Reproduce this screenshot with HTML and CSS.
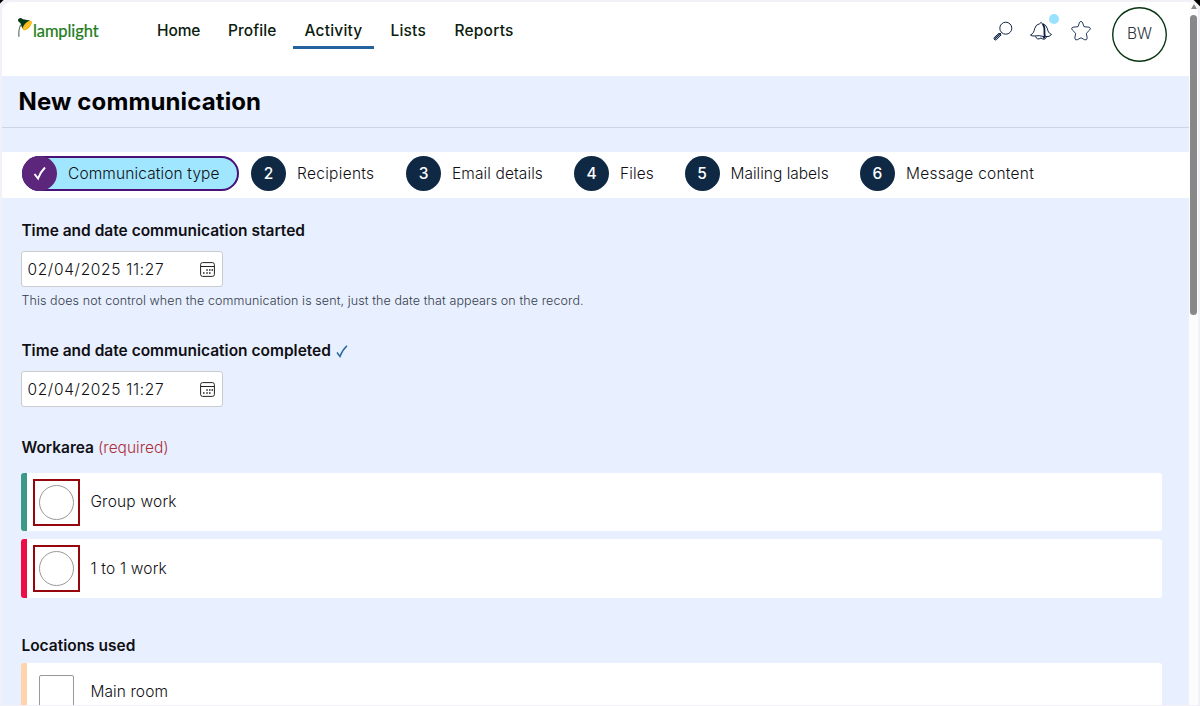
FILE: index.html
```html
<!DOCTYPE html>
<html lang="en">
<head>
<meta charset="utf-8">
<title>New communication</title>
<link rel="stylesheet" href="styles.css">
</head>
<body>
<div class="window">
  <main class="page">
    <header class="header">
      <div class="logo">
        <svg class="lamp" width="16" height="22" viewBox="0 0 16 22"><path d="M3.200 7.500C1.500 11 .9 15 1.300 20L2.600 19.500C2.200 14.500 2.700 11 4.200 8.500Z" fill="#687a6c"/><path d="M1 2.500Q2.500.2 4.500 1.200L6 2.300 13 3.500 6 12 4.500 9.500 3.500 6.300 1.200 4.300Z" fill="#073b16"/><ellipse cx="10.300" cy="8.500" rx="2.800" ry="6" transform="rotate(43 10.300 8.500)" fill="#fbb817"/><path d="M7.500 11.500L12.500 6.500" stroke="#ffe168" stroke-width="1"/></svg>
        <span class="logo-text">lamplight</span>
      </div>
      <nav class="nav">
        <a class="nav-link home">Home</a><a class="nav-link profile">Profile</a><a class="nav-link activity active">Activity</a><a class="nav-link lists">Lists</a><a class="nav-link reports">Reports</a>
      </nav>
      <div class="tools">
        <svg class="search" width="20" height="20" viewBox="0 0 20 20" fill="none" stroke="#15294b"><circle cx="12.800" cy="7.200" r="6"/><path d="M8.500 11.500L7 13M6 12.200L1 16.800Q.5 18.200 2 19L3.300 18.800 8.100 13.900Z"/><path d="M2 17.800L7 13" stroke-width="1.400"/></svg>
        <span class="bell-wrap"><svg width="24" height="20" viewBox="0 0 24 20" fill="none" stroke="#0e2244" stroke-linejoin="round"><path d="M1.500 14C4.500 12.500 5 10.500 5.700 7.500Q6.700 3.500 10.700 2.700Q12 .2 13.300 2.700Q17.300 3.500 18.300 7.500C19 10.500 19.500 12 22.500 13.500Q21 16 16 15.700Q10 14 5 15Q2.500 15 1.500 14Z"/><path d="M6.500 15.500Q8 19.500 12 17Q16 20 17.500 15.800"/><path d="M13.500 3C17 6 14.500 10 15.800 15L14.500 17.500" stroke-width="1.800"/></svg><i class="dot"></i></span>
        <svg class="star" width="22" height="22" viewBox="0 0 22 22" fill="none" stroke="#24395b" stroke-linejoin="round"><path d="M9.600 2.200Q11 .5 12.400 2.200L14 6.700 19 7.200Q21.500 8 19.700 10L16.300 13.300 17.200 18Q17 20.500 14.800 19.800L11 17.800 7.200 19.800Q5 20.500 4.800 18L5.700 13.300 2.300 10Q.5 8 3 7.200L8 6.700Z"/></svg>
        <span class="avatar">BW</span>
      </div>
    </header>
    <div class="title-bar"><h1>New communication</h1></div>
    <ol class="steps">
      <li class="step current"><span class="num"><svg width="14" height="15" viewBox="0 0 14 15"><path d="M1.500 8L5 12.500Q7 6.500 12 1.500" fill="none" stroke="#fff" stroke-width="2"/></svg></span><span class="s1">Communication type</span></li>
      <li class="step"><span class="num">2</span><span class="s2">Recipients</span></li>
      <li class="step"><span class="num">3</span><span class="s3">Email details</span></li>
      <li class="step"><span class="num">4</span><span class="s4">Files</span></li>
      <li class="step"><span class="num">5</span><span class="s5">Mailing labels</span></li>
      <li class="step"><span class="num">6</span><span class="s6">Message content</span></li>
    </ol>
    <form class="form">
      <section class="started">
        <h2 class="h-started">Time and date communication started</h2>
        <div class="date"><span>02/04/2025 11:27</span><svg width="15" height="15" viewBox="0 0 15 15" fill="none" stroke="#222"><rect x=".6" y=".6" width="13.800" height="13.800" rx="2"/><path d="M1 4.500H14"/><path d="M6.300 8h1.500M9 8h1.500M11.500 8H13M3 11h1.500M6.300 11h1.500M9 11h1.500" stroke-width="1.500"/></svg></div>
        <p class="hint">This does not control when the communication is sent, just the date that appears on the record.</p>
      </section>
      <section class="completed">
        <h2 class="h-completed"><span>Time and date communication completed</span><svg width="12" height="13" viewBox="0 0 12 13"><path d="M1 7.500L4 11.500Q6 5.500 11 .8" fill="none" stroke="#24649c" stroke-width="1.400"/></svg></h2>
        <div class="date"><span>02/04/2025 11:27</span><svg width="15" height="15" viewBox="0 0 15 15" fill="none" stroke="#222"><rect x=".6" y=".6" width="13.800" height="13.800" rx="2"/><path d="M1 4.500H14"/><path d="M6.300 8h1.500M9 8h1.500M11.500 8H13M3 11h1.500M6.300 11h1.500M9 11h1.500" stroke-width="1.500"/></svg></div>
      </section>
      <section class="workarea">
        <h2><span class="h-work">Workarea</span> <span class="required">(required)</span></h2>
        <div class="option teal"><span class="radio-box"><i class="radio"></i></span><span class="o1">Group work</span></div>
        <div class="option red"><span class="radio-box"><i class="radio"></i></span><span class="o2">1 to 1 work</span></div>
      </section>
      <section class="locations">
        <h2 class="h-loc">Locations used</h2>
        <div class="option peach"><span class="check-box"></span><span class="o3">Main room</span></div>
      </section>
    </form>
  </main>
  <aside class="scrollbar"><i class="arrow"></i><i class="thumb"></i></aside>
</div>
</body>
</html>
```
FILE: styles.css
```css
* { box-sizing: border-box; }
body {
  margin: 0; height: 706px; overflow: hidden; padding: 2px 2px 1px;
  background: linear-gradient(135deg, #000 2px, transparent 3px), linear-gradient(225deg, #000 4px, transparent 5px), #f2f1f7;
  font-family: Inter, "Noto Sans", sans-serif; font-size: 15.500px; font-weight: 360; color: #101014;
}
h1, h2, p, ol { margin: 0; padding: 0; font-size: inherit; }
svg { display: block; flex: none; }
.window { height: 703px; display: flex; overflow: hidden; border-radius: 9px 9px 0 0; background: #fff; }
.page { width: 1187px; flex: none; overflow: hidden; background: #e8effe; }
.header { height: 74px; background: #fff; display: flex; align-items: flex-start; }
.logo { width: 139px; padding: 15px 0 0 15px; display: flex; }
.logo-text { font-family: Lato, sans-serif; font-size: 16.500px; font-weight: 400; line-height: 29px; color: #207b18; letter-spacing: -.1px; -webkit-text-stroke: .2px #207b18; }
.nav { display: flex; gap: 5px; }
.nav-link { height: 47px; padding: 18px 0 0 12px; line-height: 22px; font-weight: 500; white-space: nowrap; color: #0b200e; }
.home { width: 70px; padding-left: 16px; letter-spacing: -.1px; }
.profile { width: 72px; letter-spacing: .1px; }
.activity { width: 81px; padding-left: 11.500px; letter-spacing: .2px; }
.lists { width: 59px; padding-left: 11.500px; letter-spacing: .2px; }
.reports { padding-left: 11.500px; letter-spacing: .2px; }
.active { border-bottom: 3px solid #24639d; }
.tools { margin-left: auto; padding: 5px 22px 0 0; display: flex; }
.search { margin: 14px 16px 0 0; }
.bell-wrap { position: relative; margin: 14px 17px 0 0; }
.dot { position: absolute; width: 10px; height: 10px; border-radius: 50%; background: #98e1ff; left: 20px; top: -7px; }
.star { margin: 13px 20px 0 0; }
.avatar { width: 55px; height: 55px; box-shadow: inset 0 0 0 1.400px #073512; border-radius: 50%; line-height: 53px; text-align: center; color: #303740; }
.title-bar { height: 52px; border-bottom: 1px solid #cdd4e4; padding: 9px 16.500px; }
h1 { font-size: 24px; line-height: 34px; font-weight: 700; letter-spacing: .12px; white-space: nowrap; color: #000; }
.steps { list-style: none; margin-top: 24px; height: 46px; background: #fff; display: flex; gap: 12px; padding: 4px 20px; }
.step { height: 35px; display: flex; align-items: center; gap: 11px; padding-right: 19px; white-space: nowrap; }
.num { width: 35px; height: 35px; border-radius: 50%; background: #0f2944; color: #fff; font-weight: 500; display: flex; align-items: center; justify-content: center; }
.s1 { width: 152px; letter-spacing: .12px; }
.s2 { width: 78px; letter-spacing: .3px; }
.s3 { width: 91px; letter-spacing: .1px; }
.s4 { width: 33.500px; letter-spacing: .1px; }
.s5 { width: 98.500px; }
.s6 { letter-spacing: .25px; }
.current { border-radius: 18px; background: #a0e6ff; box-shadow: inset 0 0 0 2px #4a1076; }
.current .num { background: #5b267b; }
.form { padding: 22px 27px 0 19.400px; }
h2 { font-size: 15.500px; line-height: 22px; font-weight: 600; white-space: nowrap; }
.date { margin-top: 9px; width: 202px; height: 36px; background: #fff; border: 1px solid #cbcccf; border-radius: 3px; display: flex; align-items: center; justify-content: space-between; padding: 0 7px 0 5px; white-space: nowrap; letter-spacing: .68px; }
.hint { font-size: 12.500px; line-height: 18px; margin-top: 5px; white-space: nowrap; color: #353d4c; letter-spacing: .1px; }
.started { height: 120px; }
.completed { height: 97px; }
.h-completed { display: flex; align-items: center; gap: 5px; }
.workarea { height: 198px; }
.workarea h2 { margin-bottom: 14px; }
.required { color: #ac3039; font-weight: 360; }
.option { height: 58.400px; background: #fff; border-radius: 3px; border-left: 6px solid; margin-bottom: 8px; padding-left: 5.500px; display: flex; align-items: center; gap: 10.500px; }
.option > :last-child { color: #101014; white-space: nowrap; padding-bottom: 1px; letter-spacing: .2px; }
.teal { border-color: #3c9888; }
.red { border-color: #ec0d46; }
.peach { border-color: #ffd4ac; margin-top: 6px; }
.peach > .o3 { letter-spacing: .1px; }
.radio-box { width: 47px; height: 47px; border: 2px solid #95070d; display: grid; place-items: center; }
.radio { width: 35px; height: 35px; border: 1px solid #999; border-radius: 50%; }
.check-box { width: 35px; height: 35px; border: 1px solid #999; border-radius: 2px; margin: 0 6px; }
.scrollbar { width: 9px; flex: none; background: #fcfcfc; display: flex; flex-direction: column; align-items: center; }
.arrow { margin-top: 2px; border: 3px solid transparent; border-top: 0; border-bottom: 5px solid #888; }
.thumb { margin-top: 6px; width: 7px; height: 300px; border-radius: 4px; background: #888; }
```
